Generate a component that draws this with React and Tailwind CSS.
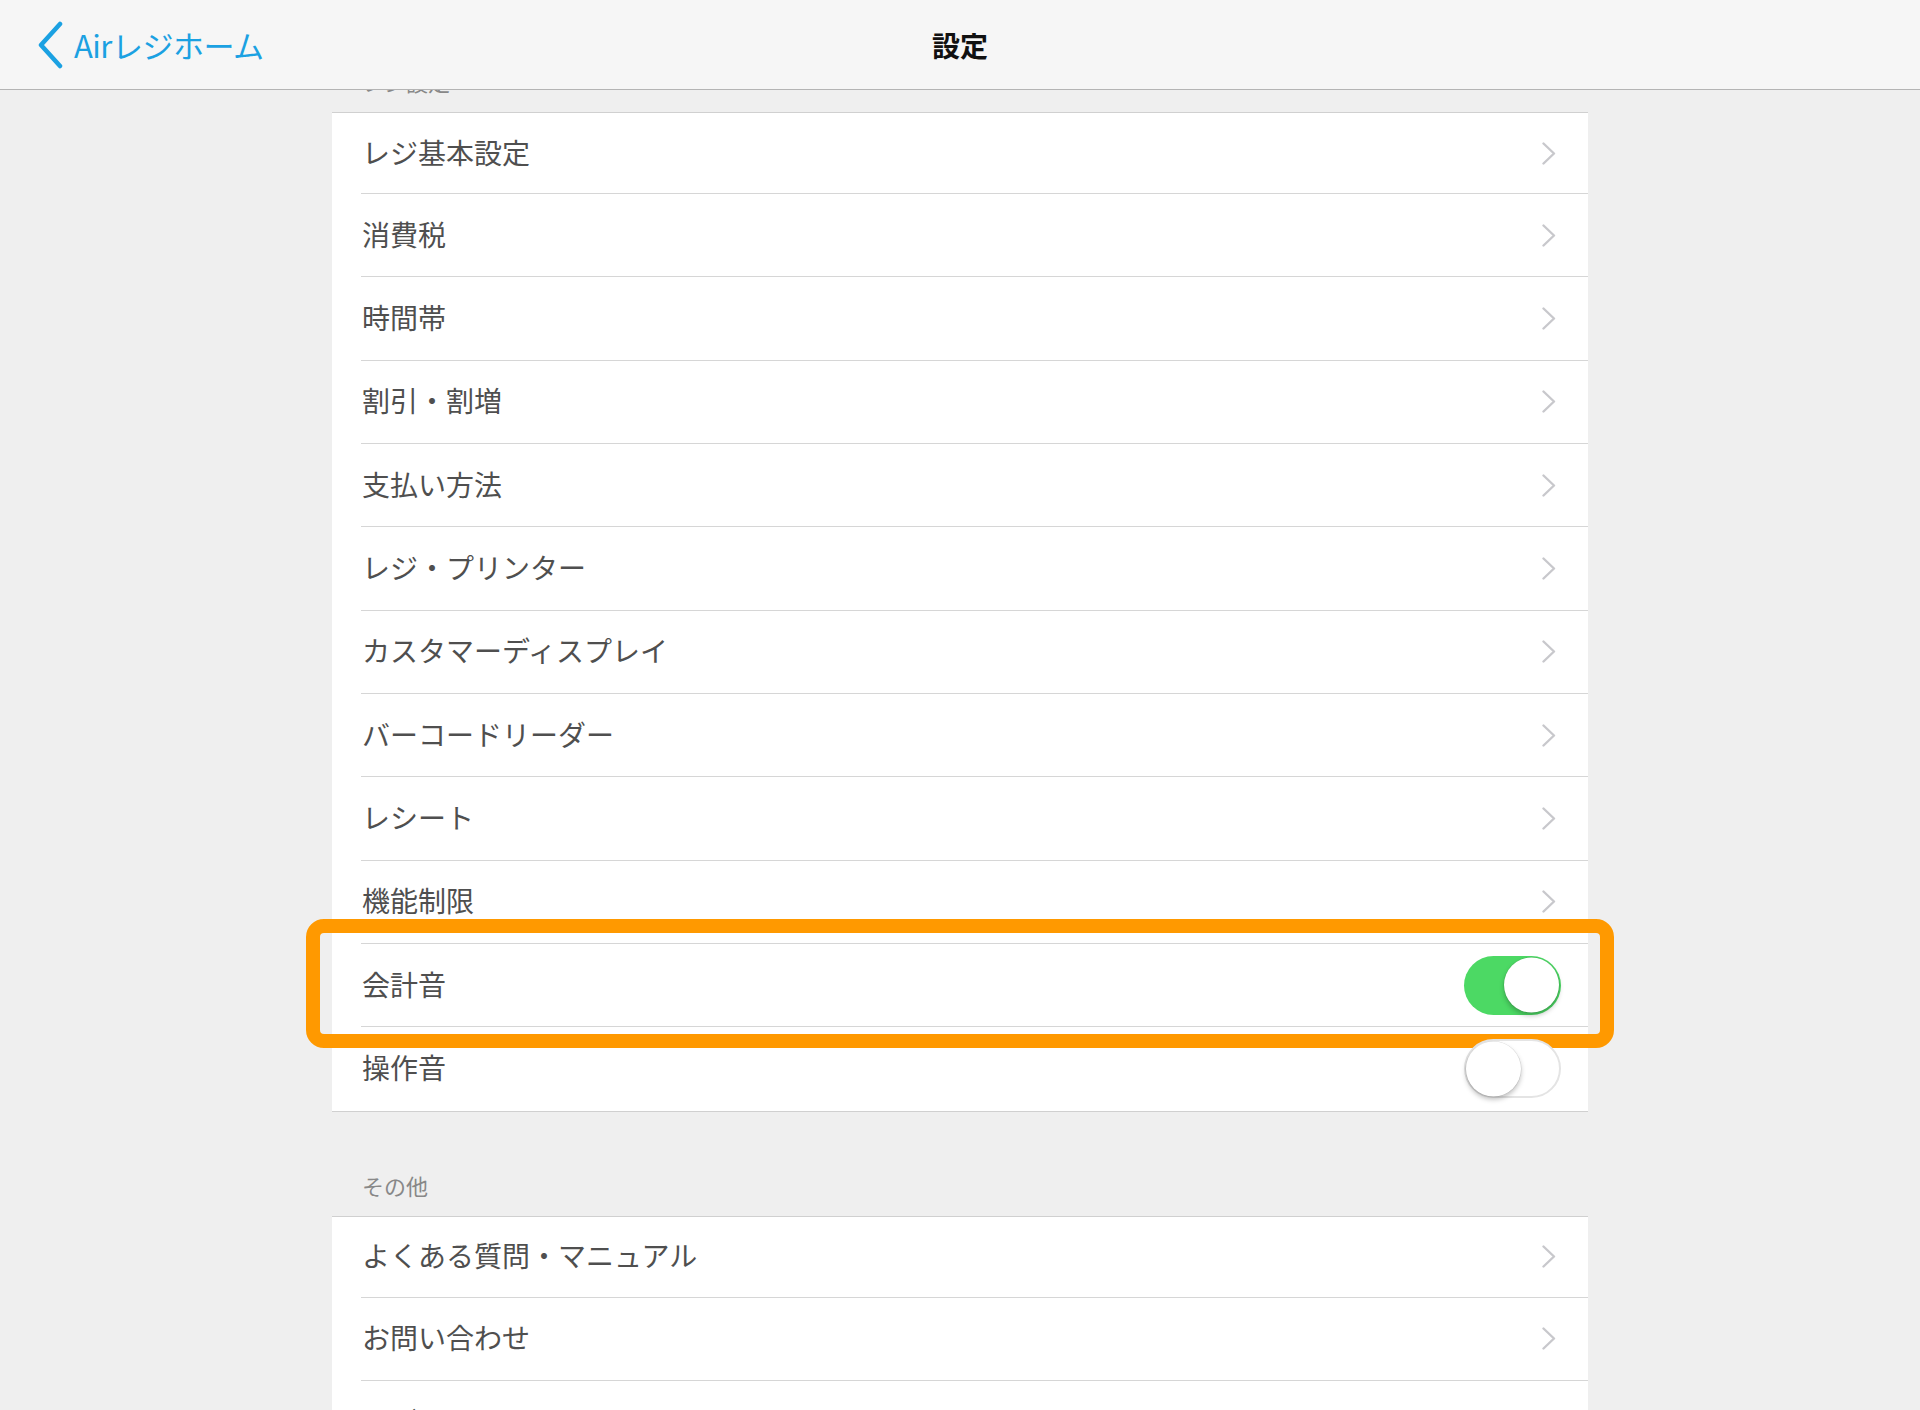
import React from "react"

const sections = [
    {
        title: "レジ設定",
        rows: [
            { label: "レジ基本設定" },
            { label: "消費税" },
            { label: "時間帯" },
            { label: "割引・割増" },
            { label: "支払い方法" },
            { label: "レジ・プリンター" },
            { label: "カスタマーディスプレイ" },
            { label: "バーコードリーダー" },
            { label: "レシート" },
            { label: "機能制限" },
            { label: "会計音", toggle: true, on: true, highlight: true },
            { label: "操作音", toggle: true, on: false },
        ],
    },
    {
        title: "その他",
        rows: [
            { label: "よくある質問・マニュアル" },
            { label: "お問い合わせ" },
            { label: "ログアウト" },
        ],
    },
]

const Chevron = () => (
    <svg width="14" height="23" viewBox="0 0 14 23" fill="none">
        <polyline points="1.5,1.5 12,11.5 1.5,21.5" stroke="#c8c8cc" strokeWidth="2.4" strokeLinecap="round" strokeLinejoin="round" />
    </svg>
)

const Toggle = ({ on }) => (
    <div className={`relative w-[97px] h-[59px] rounded-full ${on ? "bg-[#4cd964]" : "bg-white border-[2px] border-[#e4e4e4]"}`}>
        <div className={`absolute top-1/2 -translate-y-1/2 w-[55px] h-[55px] rounded-full bg-white
            shadow-[0_3px_5px_rgba(0,0,0,0.25),0_0_0_0.5px_rgba(0,0,0,0.12)] ${on ? "right-[2px]" : "left-[0px]"}`} />
    </div>
)

const Row = ({ row, first, last }) => (
    <div className={`relative ${first ? "h-[81px]" : "h-[83.33px]"}`}>
        <div className={`h-full ml-[29px] flex items-center justify-between ${last ? "" : "border-b border-[#d6d6d6]"}
            ${row.toggle ? "pr-[27px]" : "pr-[32px]"}`}>
            <span className="pl-[1px] mb-[3px] text-[28px] leading-none text-[#4f4f4f]">{row.label}</span>
            {row.toggle ? <Toggle on={row.on} /> : <Chevron />}
        </div>
        {row.highlight && (
            <div className="absolute -left-[26px] -top-[25px] w-[1308px] h-[129px] rounded-[18px] border-[14px] border-[#ff9900] pointer-events-none" />
        )}
    </div>
)

export default function App() {
    return (
        <div className="w-[1920px] h-[1410px] flex flex-col bg-[#efefef] overflow-hidden"
            style={{ fontFamily: '"Noto Sans CJK JP", "Noto Sans", sans-serif' }}>
            {/* Header */}
            <div className="h-[90px] shrink-0 grid grid-cols-3 items-center bg-[#f6f6f6] border-b border-[#b4b4b4] relative z-10">
                <div className="flex items-center pl-[38px] gap-[10px] text-[#1ba1e2]">
                    <svg width="26" height="48" viewBox="0 0 26 48" fill="none">
                        <polyline points="22,3 3,24 22,45" stroke="#1ba1e2" strokeWidth="4.5" strokeLinecap="round" strokeLinejoin="round" />
                    </svg>
                    <span className="text-[31px] leading-none tracking-[-0.5px]">Airレジホーム</span>
                </div>
                <div className="text-center text-[28px] font-bold text-[#111] leading-none">設定</div>
                <div />
            </div>

            {/* Content */}
            <div className="flex-1 overflow-hidden">
                <div className="-mt-[84px]">
                    {sections.map((sec, si) => (
                        <div key={sec.title}>
                            <div className={`w-[1256px] mx-auto flex items-end pb-[20px] pl-[30px] ${si === 0 ? "h-[106px]" : "h-[104px]"}`}>
                                <span className="text-[22px] leading-[22px] text-[#888]">{sec.title}</span>
                            </div>
                            <div className="w-[1256px] mx-auto bg-white border-y border-[#d0d0d0]">
                                {sec.rows.map((row, i) => (
                                    <Row key={row.label} row={row} first={i === 0} last={i === sec.rows.length - 1} />
                                ))}
                            </div>
                        </div>
                    ))}
                </div>
            </div>
        </div>
    )
}
